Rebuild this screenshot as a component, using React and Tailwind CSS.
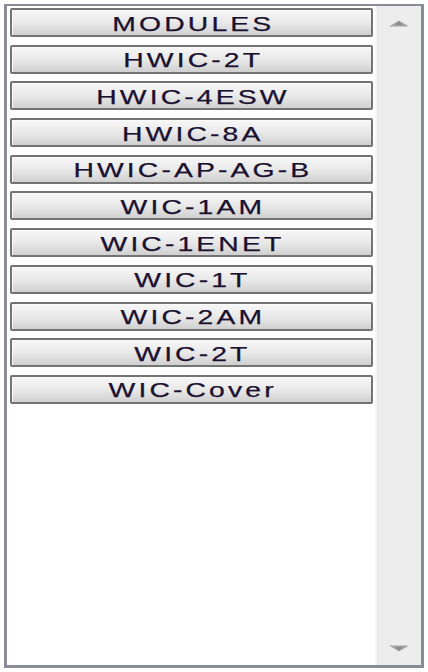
import React from "react";

const items = [
  "MODULES",
  "HWIC-2T",
  "HWIC-4ESW",
  "HWIC-8A",
  "HWIC-AP-AG-B",
  "WIC-1AM",
  "WIC-1ENET",
  "WIC-1T",
  "WIC-2AM",
  "WIC-2T",
  "WIC-Cover",
];

function ModuleButton({ label }) {
  return (
    <button
      type="button"
      className="h-[29px] w-full shrink-0 rounded-[2px] border-2 border-[#737373] bg-gradient-to-b from-[#f7f7f7] via-[#e9e9e9] to-[#d0d0d0] shadow-[inset_1px_1px_0_#fbfbfb] flex items-center justify-center overflow-hidden"
    >
      <span className="block scale-x-[1.35] pt-[1px] pl-[2px] text-[21px] leading-none tracking-[2.3px] text-[#1a1030] [-webkit-text-stroke:0.25px_#1a1030] font-['Liberation_Sans',Arial,sans-serif] whitespace-nowrap">
        {label}
      </span>
    </button>
  );
}

export default function App() {
  return (
    <div className="w-[428px] h-[672px] bg-white p-[4px]">
      <div className="h-full flex border-[#878c96] border-t-2 border-l-[3px] border-r-[3px] border-b-[3px]">
        <div className="flex-1 flex flex-col gap-[7.7px] pl-[3px] pr-[2px] pt-[2px] bg-white">
          {items.map((it) => (
            <ModuleButton key={it} label={it} />
          ))}
        </div>
        <div className="w-[46px] flex flex-col justify-between items-center bg-[#ededed] border-l-2 border-[#f7f7f7] shadow-[inset_1px_0_0_#e3e3e3] pt-[14px] pb-[13px]">
          <svg width="22" height="7" viewBox="0 0 22 7">
            <polygon points="11,0.5 21,6.5 1,6.5" fill="#a2a2a2" />
            <polygon points="11,1.5 15,5 7,5" fill="#8e8e8e" />
          </svg>
          <svg width="22" height="7" viewBox="0 0 22 7">
            <polygon points="1,0.5 21,0.5 11,6.5" fill="#a2a2a2" />
            <polygon points="7,2 15,2 11,5.5" fill="#8e8e8e" />
          </svg>
        </div>
      </div>
    </div>
  );
}
